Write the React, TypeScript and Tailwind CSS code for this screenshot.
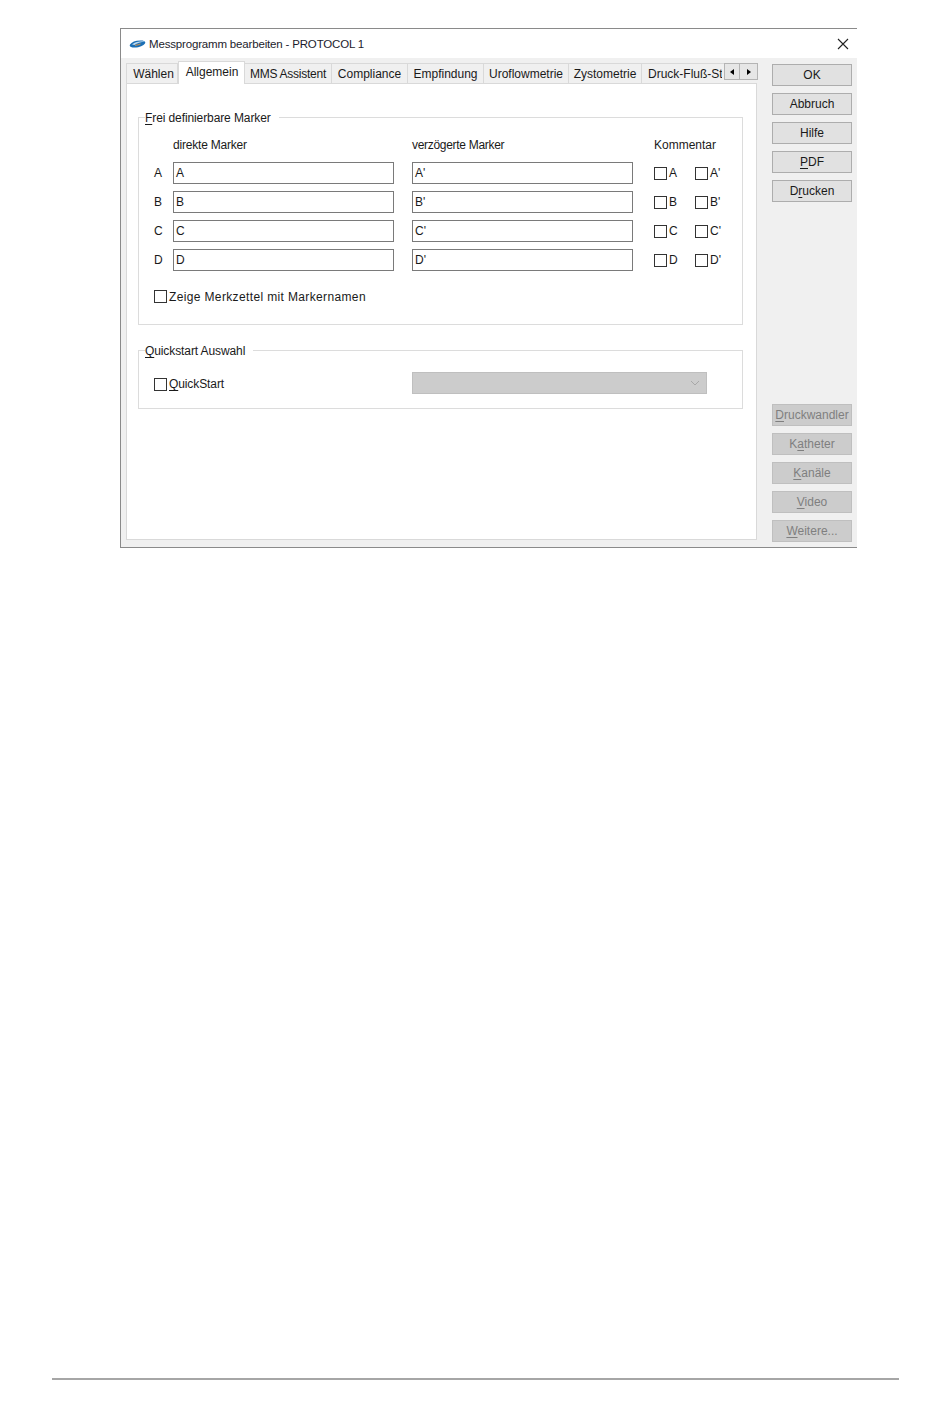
import React from 'react';

const TABS = [
  { label: 'Wählen', width: 'w-[52px]' },
  { label: 'Allgemein', width: 'w-[67px]', active: true },
  { label: 'MMS Assistent', width: 'w-[87px]', tight: true },
  { label: 'Compliance', width: 'w-[76px]' },
  { label: 'Empfindung', width: 'w-[76px]' },
  { label: 'Uroflowmetrie', width: 'w-[85px]' },
  { label: 'Zystometrie', width: 'w-[73px]' },
];

const MARKERS = ['A', 'B', 'C', 'D'];

function U({ children }: { children: React.ReactNode }) {
  return <span className="underline underline-offset-2">{children}</span>;
}

function Check({ label, className = '' }: { label: React.ReactNode; className?: string }) {
  return (
    <div className={`flex items-center gap-[2px] ${className}`}>
      <span className="w-[13px] h-[13px] border border-[#333333] bg-white shrink-0" />
      <span>{label}</span>
    </div>
  );
}

function Field({ value }: { value: string }) {
  return (
    <div className="w-[221px] h-[22px] border border-[#7a7a7a] bg-white px-[2px] flex items-center">
      {value}
    </div>
  );
}

function SideButton({ children, disabled }: { children: React.ReactNode; disabled?: boolean }) {
  return (
    <div
      className={`w-[80px] h-[22px] border flex items-center justify-center ${
        disabled ? 'bg-[#cccccc] border-[#bfbfbf] text-[#7f7f7f]' : 'bg-[#e1e1e1] border-[#adadad]'
      }`}
    >
      <span>{children}</span>
    </div>
  );
}

function LegendBox({ title, className, children }: { title: React.ReactNode; className: string; children: React.ReactNode }) {
  return (
    <fieldset className={`border border-[#dcdcdc] w-[605px] pl-[15px] ${className}`}>
      <legend className="-ml-[9px] pr-[8px] leading-[14px] tracking-[-0.1px]">
        <span className="block translate-y-[1px]">{title}</span>
      </legend>
      {children}
    </fieldset>
  );
}

export default function App() {
  return (
    <div className="w-[950px] h-[1408px] bg-white flex flex-col text-[12px] leading-none text-[#1a1a1a] font-['Liberation_Sans',Arial,sans-serif]">
      <div className="pl-[120px] pt-[28px]">
        <div className="w-[737px] h-[520px] border-l border-t border-b border-[#8a8a8a] flex flex-col bg-[#f0f0f0]">
          <div className="h-[29px] shrink-0 bg-white flex items-center pl-[8px] pr-[8px]">
            <svg width="17" height="10" viewBox="0 0 17 10" className="shrink-0">
              <ellipse cx="8.5" cy="5" rx="8" ry="3.2" transform="rotate(-12 8.5 5)" fill="#1b6fb5" />
              <path d="M3 5.6 C6 3 11 2 16 2.4 C12 3.2 8 4 5.5 6 Z" fill="#bcd9ef" />
              <path d="M6 6.4 C8 6.2 10 5.6 11.5 5" stroke="#e0913a" strokeWidth="0.9" fill="none" />
            </svg>
            <span className="ml-[3px] pt-[2px] text-[11.5px] tracking-[-0.17px] text-[#1c1c2c]">
              Messprogramm bearbeiten - PROTOCOL 1
            </span>
            <svg width="12" height="12" viewBox="0 0 12 12" className="ml-auto">
              <path d="M1 1 L11 11 M11 1 L1 11" stroke="#222222" strokeWidth="1.1" fill="none" />
            </svg>
          </div>

          <div className="flex flex-1 min-h-0">
            <div className="w-[637px] pl-[5px] pt-[2px] pb-[7px] flex flex-col">
              <div className="h-[23px] flex items-end shrink-0 relative z-10 w-[640px]">
                {TABS.map((t) =>
                  t.active ? (
                    <div
                      key={t.label}
                      className={`${t.width} h-[23px] -mb-px bg-white border border-b-0 border-[#d9d9d9] flex justify-center pt-[4px] pl-[1px]`}
                    >
                      {t.label}
                    </div>
                  ) : (
                    <div
                      key={t.label}
                      className={`${t.width} h-[20px] border-t border-r border-[#d9d9d9] first:border-l first:pl-[3px] bg-[#f0f0f0] flex items-center justify-center ${
                        t.tight ? 'tracking-[-0.25px]' : ''
                      }`}
                    >
                      {t.label}
                    </div>
                  ),
                )}
                <div className="w-[80px] h-[20px] border-t border-[#d9d9d9] pl-[6px] flex items-center overflow-hidden whitespace-nowrap">
                  Druck-Fluß-Studie
                </div>
                <div className="w-[2px] h-[20px] border-t border-[#d9d9d9]" />
                <div className="flex self-start mt-[3px] h-[17px]">
                  <div className="w-[16px] border border-[#b4b4b4] bg-[#e6e6e6] flex items-center justify-center">
                    <span className="w-0 h-0 border-y-[3px] border-y-transparent border-r-[4px] border-r-black" />
                  </div>
                  <div className="w-[18px] border border-l-0 border-[#b4b4b4] bg-[#e6e6e6] flex items-center justify-center">
                    <span className="w-0 h-0 border-y-[3px] border-y-transparent border-l-[4px] border-l-black" />
                  </div>
                </div>
              </div>

              <div className="w-[631px] flex-1 bg-white border border-[#d9d9d9] pl-[11px] pt-[26px]">
                <LegendBox title={<><U>F</U>rei definierbare Marker</>} className="h-[215px]">
                  <div className="flex h-[24px] items-center pl-[19px] mt-[9px]">
                    <span className="w-[239px] tracking-[-0.2px]">direkte Marker</span>
                    <span className="w-[242px] tracking-[-0.3px]">verzögerte Marker</span>
                    <span>Kommentar</span>
                  </div>
                  <div className="flex flex-col gap-[7px] mt-[5px]">
                    {MARKERS.map((m) => (
                      <div key={m} className="flex items-center">
                        <span className="w-[19px]">{m}</span>
                        <Field value={m} />
                        <span className="w-[18px]" />
                        <Field value={`${m}'`} />
                        <Check label={m} className="ml-[21px] w-[41px]" />
                        <Check label={`${m}'`} />
                      </div>
                    ))}
                  </div>
                  <Check label="Zeige Merkzettel mit Markernamen" className="mt-[19px] tracking-[0.36px]" />
                </LegendBox>

                <LegendBox title={<><U>Q</U>uickstart Auswahl</>} className="h-[66px] mt-[18px]">
                  <div className="flex items-center mt-[15px]">
                    <Check label={<><U>Q</U>uickStart</>} className="w-[258px] mt-[2px] tracking-[-0.1px]" />
                    <div className="w-[295px] h-[22px] bg-[#cccccc] border border-[#bfbfbf] flex items-center justify-end pr-[6px]">
                      <svg width="10" height="6" viewBox="0 0 10 6">
                        <path d="M1 1 L5 5 L9 1" stroke="#a8a8a8" fill="none" />
                      </svg>
                    </div>
                  </div>
                </LegendBox>
              </div>
            </div>

            <div className="pl-[14px] pt-[6px] pb-[5px] flex flex-col">
              <div className="flex flex-col gap-[7px]">
                <SideButton>OK</SideButton>
                <SideButton>Abbruch</SideButton>
                <SideButton>Hilfe</SideButton>
                <SideButton><U>P</U>DF</SideButton>
                <SideButton>D<U>r</U>ucken</SideButton>
              </div>
              <div className="flex flex-col gap-[7px] mt-auto">
                <SideButton disabled><U>D</U>ruckwandler</SideButton>
                <SideButton disabled>K<U>a</U>theter</SideButton>
                <SideButton disabled><U>K</U>anäle</SideButton>
                <SideButton disabled><U>V</U>ideo</SideButton>
                <SideButton disabled><U>W</U>eitere...</SideButton>
              </div>
            </div>
          </div>
        </div>
      </div>

      <div className="mt-auto mb-[28px] mx-[52px] w-[847px] h-[2px] bg-[#a6a6a6]" />
    </div>
  );
}
